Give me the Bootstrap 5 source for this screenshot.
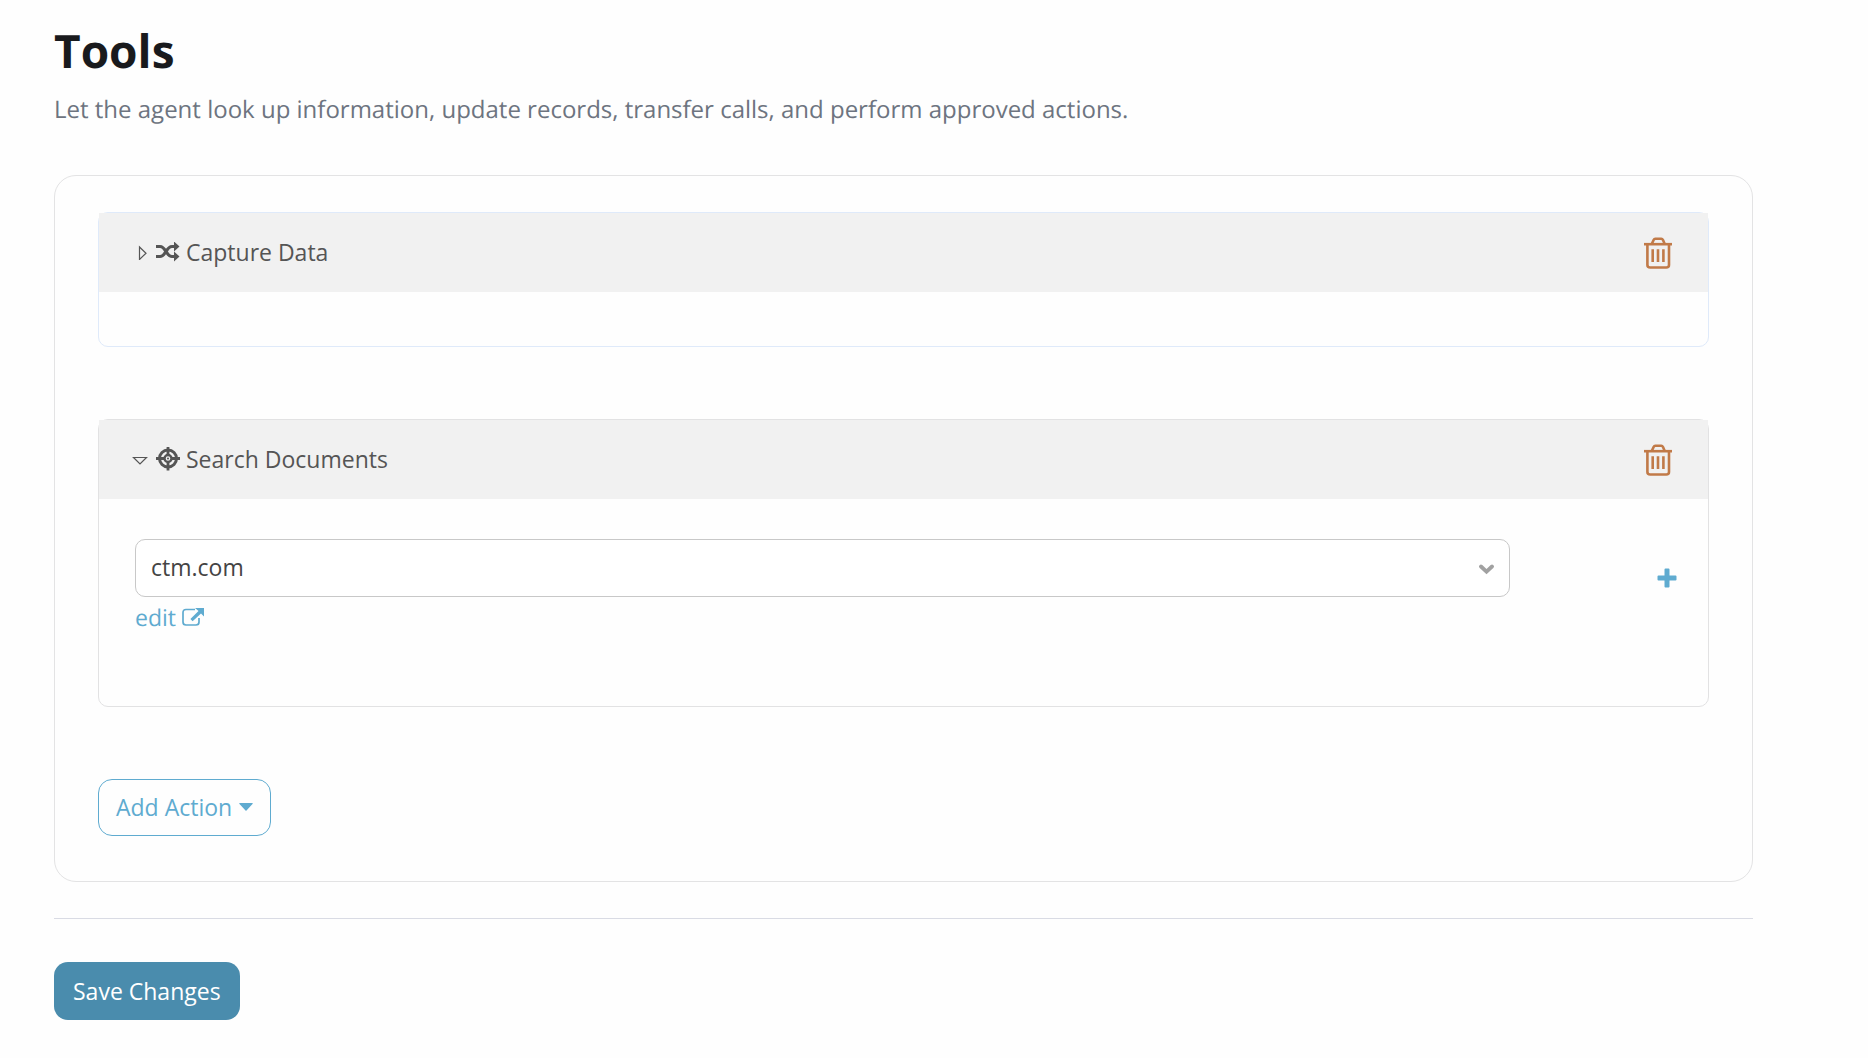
<!DOCTYPE html>
<html lang="en">
<head>
<meta charset="utf-8">
<meta name="viewport" content="width=device-width, initial-scale=1">
<title>Tools</title>
<link href="https://cdn.jsdelivr.net/npm/bootstrap@5.3.0/dist/css/bootstrap.min.css" rel="stylesheet">
<style>
  body { font-family: "Open Sans", sans-serif; font-size: 23px; line-height: 36px; color: #444; background: #fefefe; text-rendering: geometricPrecision; }
  .page { padding: 20px 115px 38px 54px; }
  .page-title { font-size: 46px; line-height: 62px; font-weight: 700; color: #191a1d; }
  .page-sub { font-size: 24px; line-height: 36px; color: #6d7480; margin-top: 10px; margin-bottom: 47px; }
  .panel { border: 1px solid #e3e3e4; border-radius: 22px; padding: 36px 43px 45px; }
  .tool { border: 1px solid #e2e2e3; border-radius: 10px; margin-bottom: 72px; }
  .tool-blue { border-color: #dfeafa; }
  .tool-head { background: #f1f1f1; height: 79px; padding: 0 36px; color: #555; }
  .tool-empty { height: 54px; }
  .tool-body { padding: 40px 30px 71px 36px; }
  .toggle { border: 0; background: none; padding: 0 0 2px; color: inherit; gap: 6px; }
  .plain { border: 0; background: none; padding: 0; line-height: 0; }
  .add-col { width: 168px; padding-right: 1px; padding-top: 29px; }
  .plain-add { display: inline-block; vertical-align: top; }
  .picker { height: 58px; font-size: 23px; line-height: 36px; padding: 8px 48px 10px 15px; border: 1px solid #c8c8c8; border-radius: 10px; color: #444; background: #fff; appearance: none; }
  .picker-arrow { position: absolute; right: 16px; top: 25px; pointer-events: none; }
  .edit-link { color: #5fabd0; text-decoration: none; gap: 6px; margin-top: 2px; }
  .btn-add { font-size: 23px; line-height: 35px; padding: 10px 17px; border: 1px solid #5fabd0; border-radius: 14px; color: #5fabd0; gap: 7px; }
  .rule { margin: 36px 0 43px; border-color: #d9dbe4; opacity: 1; }
  .btn-save { font-size: 23px; line-height: 36px; padding: 11px 19px; border: 0; border-radius: 14px; background: #4a8cad; color: #fff; }
  svg { display: block; flex: none; }
</style>
<script src="https://cdn.jsdelivr.net/npm/bootstrap@5.3.0/dist/js/bootstrap.bundle.min.js"></script>
</head>
<body>
<svg width="0" height="0" class="position-absolute" aria-hidden="true">
  <symbol id="trash" viewBox="0 0 28 32">
    <g fill="none" stroke="#c17a48" stroke-width="2.600">
      <path d="M0 7.2h28"/>
      <path d="M8 6.500 9.600 3Q10.200 1.700 11.300 1.700h6Q18.400 1.700 19 3L20.500 6.500"/>
      <path d="M3.400 7.500V28Q3.400 30.500 6.200 30.500H22.200Q25 30.500 25 28V7.500"/>
      <path d="M8.700 12.200V25M14 12.200V25M19.400 12.200V25"/>
    </g>
  </symbol>
</svg>
<main class="page">
  <h1 class="page-title mb-0">Tools</h1>
  <p class="page-sub">Let the agent look up information, update records, transfer calls, and perform approved actions.</p>

  <form>
    <section class="panel">
      <div class="tool tool-blue">
        <div class="tool-head d-flex align-items-center justify-content-between">
          <button type="button" class="toggle d-flex align-items-center" aria-expanded="false">
            <svg width="15" height="16" viewBox="0 0 15 16"><path d="M4.500 3V15.500L11 9.200Z" fill="none" stroke="#555" stroke-width="1.200"/></svg>
            <svg width="24" height="20" viewBox="0 0 24 20"><g fill="none" stroke="#555" stroke-width="3.200"><path d="M0 4.500H4C10 4.500 10 14.500 16 14.500H19"/><path d="M0 14.500H4C10 14.500 10 4.500 16 4.500H19"/></g><path d="M18 -.5 23.500 4.500 18 9.500ZM18 9.500 23.500 14.500 18 19.500Z" fill="#555"/></svg>
            <span>Capture Data</span>
          </button>
          <button type="button" class="plain" aria-label="Delete Capture Data"><svg width="28" height="32"><use href="#trash"/></svg></button>
        </div>
        <div class="tool-empty"></div>
      </div>

      <div class="tool">
        <div class="tool-head d-flex align-items-center justify-content-between">
          <button type="button" class="toggle d-flex align-items-center" aria-expanded="true">
            <svg width="15" height="16" viewBox="0 0 15 16" overflow="visible"><path d="M-1.500 6.500H11.500L5 13Z" fill="none" stroke="#555" stroke-width="1.200"/></svg>
            <svg width="24" height="24" viewBox="0 0 24 24"><g fill="none" stroke="#555" stroke-width="3"><circle cx="12" cy="11.500" r="8.500"/><circle cx="12" cy="11.500" r="3.500" stroke-width="2.400"/><path stroke-width="2.800" d="M12 0V7.500M12 15.500V23.500M0 11.500H8M16 11.500H24"/></g><circle cx="12" cy="11.500" r="1" fill="#555"/></svg>
            <span>Search Documents</span>
          </button>
          <button type="button" class="plain" aria-label="Delete Search Documents"><svg width="28" height="32"><use href="#trash"/></svg></button>
        </div>
        <div class="tool-body d-flex">
          <div class="flex-grow-1">
            <div class="position-relative">
              <select class="picker d-block w-100" aria-label="Document source"><option>ctm.com</option></select>
              <svg class="picker-arrow" width="15" height="11" viewBox="0 0 15 11"><path d="M2 2.500 7.500 7.700 13 2.500" fill="none" stroke="#a1a1a1" stroke-width="3.800" stroke-linecap="round"/></svg>
            </div>
            <a href="#" class="edit-link d-inline-flex align-items-center">edit
              <svg width="22" height="20" viewBox="0 0 22 20"><path d="M13 2.500H4Q1 2.500 1 5.500V15Q1 18 4 18H14Q17 18 17 15V11" fill="none" stroke="#5fabd0" stroke-width="1.700"/><path d="M13 1H22V9.500L19 6.600 10.600 14.200 8.400 12 16.500 4Z" fill="#5fabd0"/></svg>
            </a>
          </div>
          <div class="add-col text-end">
            <button type="button" class="plain plain-add" aria-label="Add source"><svg width="20" height="20" viewBox="0 0 20 20"><path d="M8.500 .5h3q1 0 1 1V7.500h6q1 0 1 1v3q0 1-1 1h-6v6q0 1-1 1h-3q-1 0-1-1v-6h-6q-1 0-1-1v-3q0-1 1-1h6v-6q0-1 1-1z" fill="#5fabd0"/></svg></button>
          </div>
        </div>
      </div>

      <button type="button" class="btn btn-add d-flex align-items-center">Add Action
        <svg width="14" height="12" viewBox="0 0 14 12"><path d="M.5 1H13.500Q14 1.500 13.500 2L7.500 8.500Q7 9 6.500 8.500L.5 2Q0 1.500 .5 1Z" fill="#5fabd0"/></svg>
      </button>
    </section>
    <hr class="rule">
    <button type="button" class="btn btn-save">Save Changes</button>
  </form>
</main>
</body>
</html>
